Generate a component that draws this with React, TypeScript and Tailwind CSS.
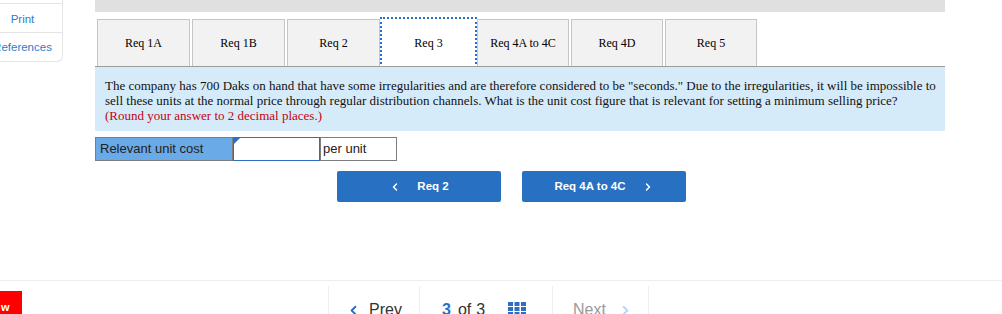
import { ChevronLeft, ChevronRight } from 'lucide-react'

const tabs = [
  { label: 'Req 1A', w: 'w-[93px]' },
  { label: 'Req 1B', w: 'w-[93px]' },
  { label: 'Req 2', w: 'w-[93px]' },
  { label: 'Req 3', w: 'w-[93px]', active: true },
  { label: 'Req 4A to 4C', w: 'w-[92px]' },
  { label: 'Req 4D', w: 'w-[92px]' },
  { label: 'Req 5', w: 'w-[92px]' },
]

function Sidebar() {
  return (
    <div className="ml-[-17px] w-[80px] h-[62px] shrink-0 border-r border-b border-[#e4e4e4] rounded-br-[6px] flex flex-col text-[11.5px] text-[#2d7ccf] font-['Liberation_Sans',Arial,sans-serif]">
      <div className="h-[4px] border-b border-[#e4e4e4]" />
      <div className="h-[29px] pt-[3px] border-b border-[#e4e4e4] flex items-center justify-center">Print</div>
      <div className="flex-1 pt-[1px] flex items-center justify-center">References</div>
    </div>
  )
}

function Tabs() {
  return (
    <div className="mt-[7px] pl-[2px] flex gap-[2px] font-['Liberation_Serif','Times_New_Roman',serif] text-[12px] text-black">
      {tabs.map(t => (
        <div
          key={t.label}
          className={
            t.active
              ? `${t.w} h-[47px] bg-white flex items-center justify-center outline-2 outline-dotted outline-[#2a6fc4]`
              : `${t.w} h-[47px] bg-[#f2f2f2] border border-b-0 border-[#c6c6c6] flex items-center justify-center`
          }
        >
          {t.label}
        </div>
      ))}
    </div>
  )
}

function Question() {
  return (
    <div className="border-t border-[#9c9c9c] bg-[#d6ebf9] pl-[10px] pt-[11px] pb-[8px] font-['Liberation_Serif','Times_New_Roman',serif] text-[13px] leading-[15px] text-[#111]">
      The company has 700 Daks on hand that have some irregularities and are therefore considered to be "seconds." Due to the irregularities, it will be impossible to
      <br />
      sell these units at the normal price through regular distribution channels. What is the unit cost figure that is relevant for setting a minimum selling price?
      <br />
      <span className="text-[#c8000f]">(Round your answer to 2 decimal places.)</span>
    </div>
  )
}

function AnswerRow() {
  return (
    <div className="mt-[6px] flex h-[24px] font-['Liberation_Sans',Arial,sans-serif] text-[13px] text-[#222]">
      <div className="w-[138px] bg-[#6aaae6] border border-[#7d7d7d] flex items-center pl-[4px]">Relevant unit cost</div>
      <div className="relative w-[87px] bg-white border border-[#2a6fc4]">
        <div className="absolute left-0 top-0 w-0 h-0 border-t-[6px] border-r-[6px] border-t-[#2a6fc4] border-r-transparent" />
      </div>
      <div className="w-[77px] border border-[#7d7d7d] flex items-center pl-[2px]">per unit</div>
    </div>
  )
}

function NavButtons() {
  return (
    <div className="mt-[10px] ml-[242px] flex gap-[21px] font-['Liberation_Sans',Arial,sans-serif] text-[11.5px] font-bold text-white">
      <div className="w-[164px] h-[31px] rounded-[2px] bg-[#2870c1] flex items-center justify-center gap-[16px]">
        <ChevronLeft size={12} strokeWidth={3} />
        <span>Req 2</span>
      </div>
      <div className="w-[164px] h-[31px] rounded-[2px] bg-[#2870c1] flex items-center justify-center gap-[16px]">
        <span>Req 4A to 4C</span>
        <ChevronRight size={12} strokeWidth={3} />
      </div>
    </div>
  )
}

function GridIcon() {
  return (
    <svg width="18" height="14" viewBox="0 0 18 14" className="fill-[#2a6fc4]">
      {[0, 1, 2].map(r =>
        [0, 1, 2].map(c => <rect key={`${r}-${c}`} x={c * 6.5} y={r * 5} width="5" height="4" />)
      )}
    </svg>
  )
}

function Footer() {
  return (
    <div className="border-t border-[#eeeeee] flex flex-1 font-['Liberation_Sans',Arial,sans-serif]">
      <div className="mt-[10px] w-[22px] h-[23px] bg-[#ff0000] text-white text-[11px] font-bold flex items-end pl-[1px] leading-[14px]">w</div>
      <div className="ml-[306px] mt-[5px] flex text-[16px] leading-[16px]">
        <div className="w-[91px] border-l border-[#eeeeee] pt-[16px] pl-[17px] flex items-start gap-[8px] text-[#333]">
          <ChevronLeft size={15} strokeWidth={3} className="text-[#2a6fc4] mt-[1px]" />
          <span>Prev</span>
        </div>
        <div className="w-[133px] border-l border-[#eeeeee] pt-[16px] pl-[22px] flex items-start text-[#333]">
          <span className="font-bold text-[#2a6fc4]">3</span>
          <span className="ml-[7px]">of</span>
          <span className="ml-[5px]">3</span>
          <span className="ml-[23px]"><GridIcon /></span>
        </div>
        <div className="w-[97px] border-x border-[#eeeeee] pt-[16px] pl-[20px] flex items-start gap-[12px] text-[#9a9a9a]">
          <span>Next</span>
          <ChevronRight size={15} strokeWidth={3} className="text-[#bcd5ef] mt-[1px]" />
        </div>
      </div>
    </div>
  )
}

export default function App() {
  return (
    <div className="w-[1002px] h-[314px] overflow-hidden bg-white flex flex-col">
      <div className="h-[280px] shrink-0 flex">
        <Sidebar />
        <div className="ml-[32px] w-[850px] flex flex-col">
          <div className="h-[12px] bg-[#e0e0e0]" />
          <Tabs />
          <Question />
          <AnswerRow />
          <NavButtons />
        </div>
      </div>
      <Footer />
    </div>
  )
}
